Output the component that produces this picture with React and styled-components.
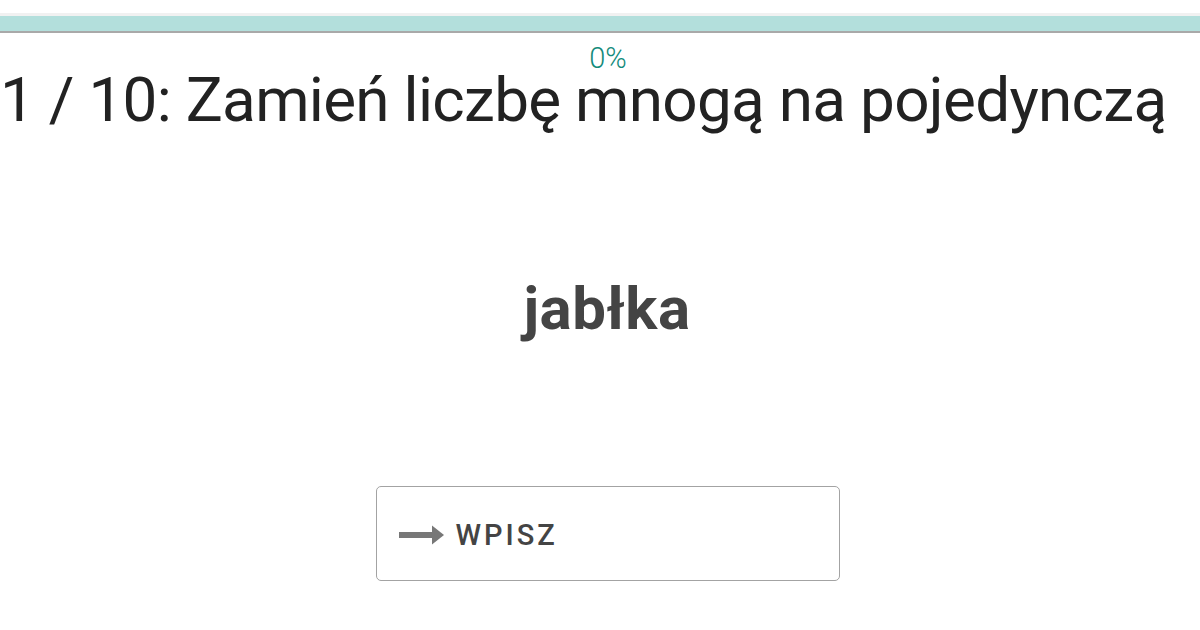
import React from 'react';
import styled, { createGlobalStyle } from 'styled-components';

const GlobalStyle = createGlobalStyle`
  html, body {
    margin: 0;
    padding: 0;
    background: #fff;
  }
  body {
    font-family: Roboto, "Noto Sans", sans-serif;
  }
`;

const Page = styled.div`
  width: 1200px;
  height: 630px;
  overflow: hidden;
  padding-top: 13px;
  box-sizing: border-box;
`;

const Track = styled.div`
  height: 15px;
  border-top: 3px solid #f1f1f1;
  border-bottom: 2px solid #a9a9a9;
  background: #b3dfdc;
`;

const Percent = styled.div`
  margin-top: 11px;
  text-align: center;
  font-size: 29px;
  font-weight: 300;
  line-height: 28px;
  color: #138b7b;
  padding-left: 16px;
`;

const Title = styled.h1`
  margin: 0;
  font-size: 62px;
  font-weight: 400;
  line-height: 56px;
  letter-spacing: -0.7px;
  color: #222;
  white-space: nowrap;
`;

const Word = styled.div`
  margin-top: 148px;
  text-align: center;
  font-size: 60px;
  font-weight: 700;
  letter-spacing: 0.5px;
  color: #444;
  line-height: 66px;
  padding-left: 14px;
`;

const Row = styled.div`
  display: flex;
  justify-content: center;
  margin-top: 144px;
  padding-left: 15px;
`;

const Button = styled.button`
  width: 464px;
  height: 95px;
  box-sizing: border-box;
  border: 1.5px solid #a3a3a3;
  border-radius: 5px;
  background: #fff;
  display: flex;
  align-items: center;
  gap: 12px;
  padding: 2px 0 0 22px;
  font-family: Roboto, "Noto Sans", sans-serif;
  font-size: 29px;
  font-weight: 500;
  letter-spacing: 3px;
  color: #444;
`;

function Arrow() {
  return (
    <svg width="45" height="20" viewBox="0 0 45 20">
      <rect x="0" y="7" width="34" height="6" fill="#777" />
      <path d="M33 0.5 L45 10 L33 19.5 Z" fill="#777" />
    </svg>
  );
}

export default function App() {
  return (
    <Page>
      <GlobalStyle />
      <Track />
      <Percent>0%</Percent>
      <Title>1 / 10: Zamień liczbę mnogą na pojedynczą</Title>
      <Word>jabłka</Word>
      <Row>
        <Button>
          <Arrow />
          WPISZ
        </Button>
      </Row>
    </Page>
  );
}
